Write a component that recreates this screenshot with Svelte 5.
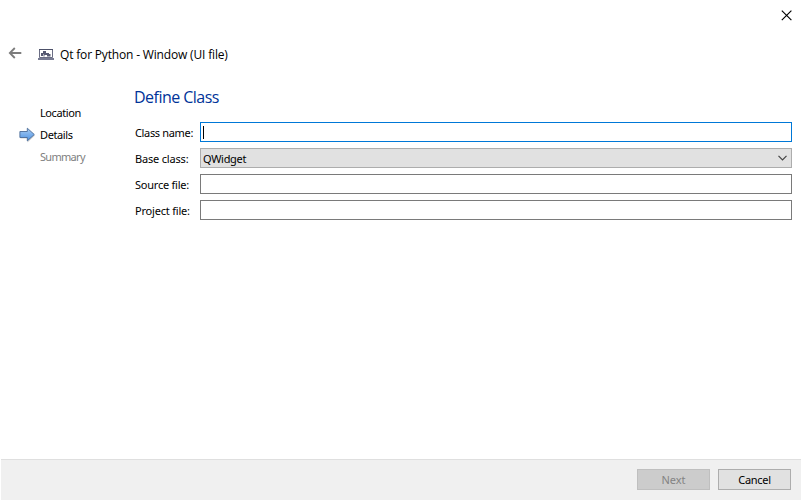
<script>
  let className = $state('');
  let sourceFile = $state('');
  let projectFile = $state('');
</script>

<div class="window">
  <div class="titlebar">
    <button class="close" aria-label="Close">
      <svg width="11" height="11" viewBox="0 0 11 11"><path d="M.8.6l9.6 9.6M10.4.6L.8 10.2" stroke="#000" stroke-width="1.15" fill="none" /></svg>
    </button>
  </div>

  <header>
    <svg class="back" width="14" height="12" viewBox="0 0 14 12"><path d="M1.8 6H13.3M6.8 1l-5 5 5 5" fill="none" stroke="#7c7c7c" stroke-width="1.8" /></svg>
    <svg class="app" width="16" height="13" viewBox="0 0 16 13">
      <path d="M1.5 1.5h13v8h-13z" fill="#fff" stroke="#6a6d84" />
      <path d="M1 1h14v1H1z" fill="#4c5068" />
      <path d="M0 10h16v2H0z" fill="#777b92" />
      <path d="M5 3h3v3H5v2H3V5h2zM8 5h3v1h1.5v2.5H9V7H6.5v1.5h-1V6H8z" fill="#565a72" />
    </svg>
    <span class="title">Qt for Python - Window (UI file)</span>
  </header>

  <main>
    <nav>
      <div class="step"><span class="location">Location</span></div>
      <div class="step active">
        <svg width="17" height="16" viewBox="0 0 17 16">
          <defs>
            <linearGradient id="arrow" x1="0" y1="0" x2="0" y2="1">
              <stop offset="0" stop-color="#a9cdf4" />
              <stop offset="1" stop-color="#4d92e2" />
            </linearGradient>
          </defs>
          <path d="M1 5h7V1.5L15.5 8 8 14.8V11H1z" fill="#b8b8b8" opacity=".6" transform="translate(.5 .6)" />
          <path d="M.9 4.5h7.4V1.2l7 6.3-7 6.4v-3.4H.9z" fill="url(#arrow)" stroke="#4a6b97" stroke-width=".9" />
        </svg>
        <span class="details">Details</span>
      </div>
      <div class="step pending"><span class="summary">Summary</span></div>
    </nav>

    <section>
      <h1>Define Class</h1>
      <div class="form">
        <label for="class-name"><span class="l1">Class name:</span></label>
        <div class="field focus"><i class="caret"></i><input id="class-name" bind:value={className} /></div>
        <label for="base-class"><span class="l2">Base class:</span></label>
        <button class="field combo" id="base-class">
          <span>QWidget</span>
          <svg width="9" height="6" viewBox="0 0 9 6"><path d="M.5.8l4 4 4-4" fill="none" stroke="#444" stroke-width="1.2" /></svg>
        </button>
        <label for="source-file"><span class="l3">Source file:</span></label>
        <div class="field"><input id="source-file" bind:value={sourceFile} /></div>
        <label for="project-file"><span class="l4">Project file:</span></label>
        <div class="field"><input id="project-file" bind:value={projectFile} /></div>
      </div>
    </section>
  </main>

  <footer>
    <button class="btn next" disabled><span>Next</span></button>
    <button class="btn cancel"><span>Cancel</span></button>
  </footer>
</div>

<style>
  :global(body) { background: #fff; overflow: hidden; }
  .window {
    box-sizing: border-box;
    width: 802px;
    height: 501px;
    padding: 0 1px 1px;
    display: flex;
    flex-direction: column;
    background: #fff;
    color: #000;
    font: 11px/16px "Noto Sans", "Open Sans", sans-serif;
  }
  button, input { font: inherit; color: inherit; border: 0; padding: 0; margin: 0; background: none; outline: none; border-radius: 0; }
  svg { display: block; flex: none; }
  span { white-space: nowrap; }
  .titlebar { height: 40px; display: flex; justify-content: flex-end; padding: 10px 9px 0 0; box-sizing: border-box; }
  .close { width: 11px; height: 11px; }
  header { height: 29px; display: flex; align-items: center; padding-left: 7px; }
  .back { margin-top: -3px; }
  .app { margin: 0 6px 0 16px; }
  .title { font: 12px/16px "Open Sans", sans-serif; letter-spacing: -0.17px; margin-top: 1px; }
  main { flex: 1; display: flex; }
  nav { width: 133px; padding-top: 33px; }
  .step { height: 22px; padding-left: 39px; display: flex; align-items: center; }
  .active { padding-left: 18px; }
  .active svg { margin-right: 4px; }
  .pending { color: #808080; }
  .location, .details { letter-spacing: -0.4px; }
  .summary { letter-spacing: -0.7px; }
  .l1 { letter-spacing: -0.34px; }
  .l2 { letter-spacing: -0.18px; }
  .l3 { letter-spacing: -0.23px; }
  .l4 { letter-spacing: -0.2px; }
  section { flex: 1; padding: 17px 9px 0 0; }
  h1 { margin: 0 0 13px; font: 16px/23px "Open Sans", sans-serif; color: #003399; letter-spacing: -0.53px; }
  .form { display: grid; grid-template-columns: 60px 592px; grid-auto-rows: 20px; column-gap: 6px; row-gap: 6px; }
  label { padding: 3px 0 0 1px; }
  .field { box-sizing: border-box; border: 1px solid #7a7a7a; background: #fff; display: flex; align-items: center; min-width: 0; }
  .field input { width: 100%; height: 16px; padding: 0 3px; }
  .focus { border-color: #0078d7; }
  .caret { width: 1px; height: 13px; margin-left: 2px; background: #000; flex: none; }
  .combo { border-color: #adadad; background: #e1e1e1; justify-content: space-between; padding: 2px 4px 0 2px; }
  .combo span { letter-spacing: -0.3px; }
  .combo svg { margin-top: -2px; }
  footer { box-sizing: border-box; height: 41px; border-top: 1px solid #dfdfdf; background: #f0f0f0; display: flex; justify-content: flex-end; gap: 8px; padding: 9px 10px 0 0; }
  .btn { box-sizing: border-box; width: 73px; height: 21px; border: 1px solid #adadad; background: #e1e1e1; text-align: center; line-height: 19px; }
  .cancel { letter-spacing: -0.3px; }
  .next { background: #ccc; border-color: #bfbfbf; color: #838383; }
</style>
